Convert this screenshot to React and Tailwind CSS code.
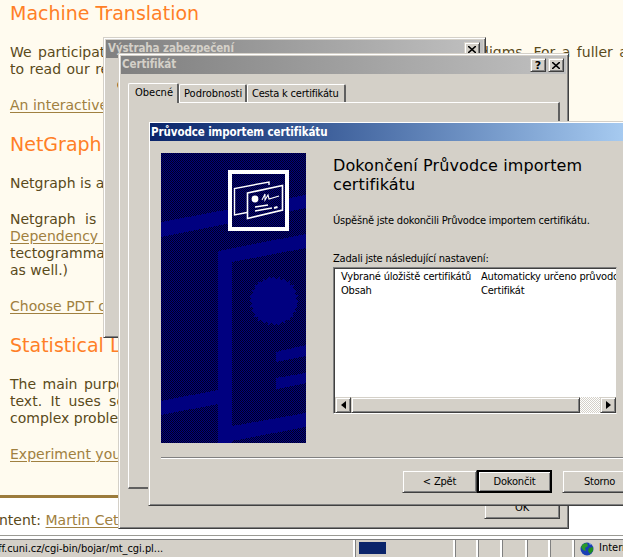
import React from 'react';

const bevel = 'border border-[#d4d0c8] border-r-[#404040] border-b-[#404040] shadow-[inset_1px_1px_0_#ffffff,inset_-1px_-1px_0_#808080]';
const uiFont = "font-['DejaVu_Sans_Condensed','Liberation_Sans',sans-serif] text-[11px] tracking-[-0.2px] text-black";
const titleFont = "font-['DejaVu_Sans_Condensed','Liberation_Sans',sans-serif] text-[11.5px] tracking-[-0.1px] font-bold";

const starPoints = Array.from({ length: 56 }, (_, i) => {
  const r = i % 2 === 0 ? 25 : 22;
  const a = (i / 56) * Math.PI * 2;
  return `${113 + r * Math.cos(a)},${148 + r * Math.sin(a)}`;
}).join(' ');

const WizardArt = () => (
  <svg width="145" height="290" viewBox="0 0 145 290" shapeRendering="crispEdges" className="shrink-0 block">
    <defs>
      <pattern id="dither" width="2" height="2" patternUnits="userSpaceOnUse">
        <rect width="2" height="2" fill="#000080" />
        <rect width="1" height="1" fill="#000020" />
        <rect x="1" y="1" width="1" height="1" fill="#000020" />
      </pattern>
    </defs>
    <rect width="145" height="290" fill="url(#dither)" />
    <g fill="#000080">
      <polygon points="0,69 145,42 145,55 0,84" />
      <polygon points="57,98 145,81 145,95 71,109 71,290 57,290" />
      <polygon points="0,248 57,237 57,251 0,262" />
      <polygon points="71,273 145,260 145,274 60,290 71,290" />
      <polygon points="115,199 145,192 145,203 115,209" />
      <polygon points="115,225 145,220 145,230 115,236" />
      <polygon points={starPoints} />
    </g>
    <rect x="69" y="19" width="57" height="57" fill="url(#dither)" stroke="#ffffff" strokeWidth="4" />
    <g fill="none" stroke="#ffffff" shapeRendering="auto">
      <path d="M86 59.5 L73.5 62 V35.5 L108 29 V32" strokeWidth="1.4" />
      <path d="M86.5 40 L121.5 32.5 V57 L86.5 65.5 Z" strokeWidth="1.6" />
      <circle cx="94" cy="46" r="3.4" fill="#ffffff" stroke="none" />
      <path d="M101 47 L104 41 L104 47 L107 42 L108 46 L118 43" strokeWidth="1.1" />
      <path d="M94 54 L107 52 M94 58 L111 55" strokeWidth="1.4" />
      <path d="M113 55 L116.5 54" strokeWidth="2" />
    </g>
  </svg>
);

const Globe = () => (
  <svg width="14" height="14" viewBox="0 0 14 14" className="shrink-0">
    <circle cx="7" cy="7" r="6.5" fill="#1a3fb5" />
    <path d="M3 2 L7 1 L8 4 L5 6 L6 9 L3 8 L1 5 Z" fill="#2a9a2a" />
    <path d="M9 6 L13 5 L13 9 L10 12 L8 9 Z" fill="#1f8f1f" />
    <path d="M9 1 L11 2 L10 3 Z" fill="#9fd0ff" />
  </svg>
);

const PageLine = ({ children, className = '' }) => (
  <div className={`h-[17px] whitespace-nowrap ${className}`}>{children}</div>
);

const Heading = ({ children, mt }) => (
  <h2 className={`${mt} h-[24px] leading-[24px] text-[19px] text-[#ff7f27]`}>{children}</h2>
);

const linkClass = 'text-[#a08040] underline underline-offset-2';

const CloseIcon = () => (
  <svg width="8" height="7" viewBox="0 0 8 7"><path d="M0 0 L8 7 M8 0 L0 7" stroke="#000" strokeWidth="1.6" /></svg>
);

const App = () => {
  return (
    <div className="relative w-[623px] h-[557px] overflow-hidden flex flex-col font-['DejaVu_Sans',sans-serif]">
      {/* page behind the dialogs */}
      <main className="h-[495px] shrink-0 overflow-hidden bg-[#fffbef] pl-[10px] pt-px text-[14px] leading-[17px] text-[#5a4a1a]">
        <Heading mt="">Machine Translation</Heading>
        <div className="mt-[19px]">
          <PageLine className="grid grid-cols-[470px_1fr] [word-spacing:2px]">
            <span className="overflow-hidden">We participate in several paradigms.</span>
            <span>digms. For a fuller a</span>
          </PageLine>
          <PageLine className="grid grid-cols-[478px_1fr] [word-spacing:1px]">
            <span className="overflow-hidden">to read our reports and papers.</span>
            <span className="pl-[9px]">have a l</span>
          </PageLine>
        </div>
        <p className="mt-[19px]"><a className={linkClass}>An interactive demo</a></p>
        <Heading mt="mt-[18px]">NetGraph</Heading>
        <p className="mt-[19px]">Netgraph is a tool</p>
        <div className="mt-[19px]">
          <PageLine className="[word-spacing:5px]">Netgraph is</PageLine>
          <PageLine className="[word-spacing:10px]"><a className={linkClass}>Dependency Treebank</a></PageLine>
          <PageLine>tectogrammatical</PageLine>
          <PageLine>as well.)</PageLine>
        </div>
        <p className="mt-[19px]"><a className={linkClass}>Choose PDT or</a></p>
        <Heading mt="mt-[18px]">Statistical LFG</Heading>
        <div className="mt-[19px]">
          <PageLine className="[word-spacing:2px]">The main purpose</PageLine>
          <PageLine className="[word-spacing:4px]">text. It uses some</PageLine>
          <PageLine>complex problems</PageLine>
        </div>
        <p className="mt-[19px]"><a className={linkClass}>Experiment yourself</a></p>
      </main>
      <div className="h-[3px] shrink-0 bg-[#9c7c3c]" />
      <footer className="h-[37px] shrink-0 bg-white pt-[14px] text-[14px] leading-[17px] text-[#5a4a1a] whitespace-nowrap">
        <span className="ml-[-1px]">ntent:</span> <a className={linkClass}>Martin Cetkovsky</a>
      </footer>

      {/* browser status bar */}
      <div className={`h-[22px] shrink-0 bg-[#d4d0c8] border-t border-[#9a9a94] ${uiFont}`}>
        <div className="h-[3px] bg-white" />
        <div className="h-[18px] border-t border-[#808080] flex">
          <div className="w-[355px] overflow-hidden whitespace-nowrap leading-[17px] tracking-[-0.05px] border-r-2 border-white"><span className="ml-[-2px] block">ff.cuni.cz/cgi-bin/bojar/mt_cgi.pl...</span></div>
          <div className="w-[100px] pl-[3px] pt-[2px] border-l border-[#808080] border-r-2 border-r-white"><div className="w-[27px] h-[12px] bg-[#0a246a]" /></div>
          <div className="w-[23px] border-l border-[#808080] border-r-2 border-r-white" />
          <div className="w-[24px] border-l border-[#808080] border-r-2 border-r-white" />
          <div className="w-[25px] border-l border-[#808080] border-r-2 border-r-white" />
          <div className="w-[23px] border-l border-[#808080] border-r-2 border-r-white" />
          <div className="w-[24px] border-l border-[#808080] border-r-2 border-r-white" />
          <div className="flex-1 flex items-center gap-[5px] pl-[5px] border-l border-[#808080] tracking-normal whitespace-nowrap overflow-hidden"><Globe />Internet</div>
        </div>
      </div>

      {/* Výstraha zabezpečení */}
      <section className={`absolute left-[103px] top-[37px] w-[383px] h-[301px] bg-[#d4d0c8] ${bevel} p-[2px]`}>
        <div className="h-[18px] flex items-center justify-between pl-[2px] pr-[3px] bg-linear-to-r from-[#808080] to-[#c0c0c0]">
          <span className={`${titleFont} text-[#d4d0c8]`}>Výstraha zabezpečení</span>
          <span className={`w-[16px] h-[14px] flex items-center justify-center bg-[#d4d0c8] ${bevel}`}><CloseIcon /></span>
        </div>
        <p className={`${uiFont} pl-[11px] pt-[20px] text-[#404040]`}>O</p>
      </section>

      {/* Certifikát */}
      <section className={`absolute left-[118px] top-[53px] w-[451px] h-[476px] bg-[#d4d0c8] ${bevel} p-[2px]`}>
        <div className="h-[18px] flex items-center justify-between pl-px pr-[2px] bg-linear-to-r from-[#808080] to-[#c0c0c0]">
          <span className={`${titleFont} text-[#d4d0c8]`}>Certifikát</span>
          <span className="flex gap-[2px]">
            <span className={`w-[16px] h-[14px] flex items-center justify-center bg-[#d4d0c8] text-[11px] leading-none font-bold text-black ${bevel}`}>?</span>
            <span className={`w-[16px] h-[14px] flex items-center justify-center bg-[#d4d0c8] ${bevel}`}><CloseIcon /></span>
          </span>
        </div>
        <div className={`ml-[7px] mt-[9px] flex items-end ${uiFont}`}>
          <div className="relative z-10 w-[51px] h-[20px] -mb-px bg-[#d4d0c8] border-t border-l border-white border-r-2 border-r-[#606060] rounded-t-[2px] pl-[6px] leading-[17px] tracking-normal">Obecné</div>
          <div className="w-[68px] h-[18px] border-t border-l border-white border-r-2 border-r-[#606060] rounded-t-[2px] pl-[4px] leading-[17px] tracking-normal">Podrobnosti</div>
          <div className="w-[99px] h-[18px] border-t border-l border-white border-r-2 border-r-[#606060] rounded-t-[2px] pl-[4px] leading-[17px] whitespace-nowrap">Cesta k certifikátu</div>
        </div>
        <div className="ml-[7px] w-[432px] h-[387px] border-t border-l border-white border-r-2 border-r-[#606060] border-b-2 border-b-[#606060]" />
        <div className="flex justify-end pr-[6px] mt-[7px]">
          <button className={`w-[76px] h-[23px] bg-[#d4d0c8] leading-[19px] ${uiFont} ${bevel}`}>OK</button>
        </div>
      </section>

      {/* Průvodce importem certifikátu */}
      <section className={`absolute left-[148px] top-[121px] w-[500px] h-[385px] bg-[#d4d0c8] ${bevel} p-px`}>
        <div className={`h-[18px] pl-px leading-[18px] bg-linear-to-r from-[#0a246a] to-[#a6caf0] w-[473px] text-white ${titleFont}`}>Průvodce importem certifikátu</div>
        <div className="flex gap-[27px] pl-[11px] pt-[12px]">
          <WizardArt />
          <div className={`w-[284px] ${uiFont}`}>
            <h1 className="font-['DejaVu_Sans',sans-serif] text-[16px] tracking-[0.1px] leading-[19px] pt-[3px]">Dokončení Průvodce importem certifikátu</h1>
            <p className="mt-[19px] leading-[15px] whitespace-nowrap">Úspěšně jste dokončili Průvodce importem certifikátu.</p>
            <p className="mt-[23px] leading-[15px]">Zadali jste následující nastavení:</p>
            <div className="mt-px h-[147px] border border-[#808080] border-r-[#d4d0c8] border-b-white bg-white flex flex-col shadow-[inset_1px_1px_0_#404040]">
              <div className="flex-1 pl-[7px] pt-[2px] leading-[14px] overflow-hidden whitespace-nowrap">
                <div className="flex"><span className="w-[140px]">Vybrané úložiště certifikátů</span><span className="flex-1 overflow-hidden">Automaticky určeno průvodcem</span></div>
                <div className="flex"><span className="w-[140px]">Obsah</span><span>Certifikát</span></div>
              </div>
              <div className="h-[16px] ml-px flex bg-[#d4d0c8]">
                <span className={`w-[16px] flex items-center justify-center ${bevel}`}>
                  <svg width="5" height="8" viewBox="0 0 5 8"><path d="M5 0 V8 L0 4 Z" fill="#000" /></svg>
                </span>
                <span className={`w-[229px] ${bevel}`} />
                <span className="flex-1 bg-[repeating-conic-gradient(#d4d0c8_0_25%,#ffffff_0_50%)] bg-[length:2px_2px]" />
                <span className={`w-[16px] flex items-center justify-center ${bevel}`}>
                  <svg width="5" height="8" viewBox="0 0 5 8"><path d="M0 0 V8 L5 4 Z" fill="#000" /></svg>
                </span>
              </div>
            </div>
          </div>
        </div>
        <div className="ml-[11px] mt-[14px] h-[2px] border-t border-[#808080] border-b border-b-white" />
        <div className={`flex pl-[252px] pt-[11px] ${uiFont}`}>
          <button className={`w-[75px] h-[23px] bg-[#d4d0c8] leading-[19px] ${bevel}`}>&lt; Zpět</button>
          <button className="w-[75px] h-[23px] bg-[#d4d0c8] leading-[19px] border-2 border-black shadow-[inset_1px_1px_0_#ffffff,inset_-1px_-1px_0_#808080]">Dokončit</button>
          <button className={`ml-[10px] w-[75px] h-[23px] bg-[#d4d0c8] leading-[19px] ${bevel}`}>Storno</button>
        </div>
      </section>
    </div>
  );
};

export default App;
